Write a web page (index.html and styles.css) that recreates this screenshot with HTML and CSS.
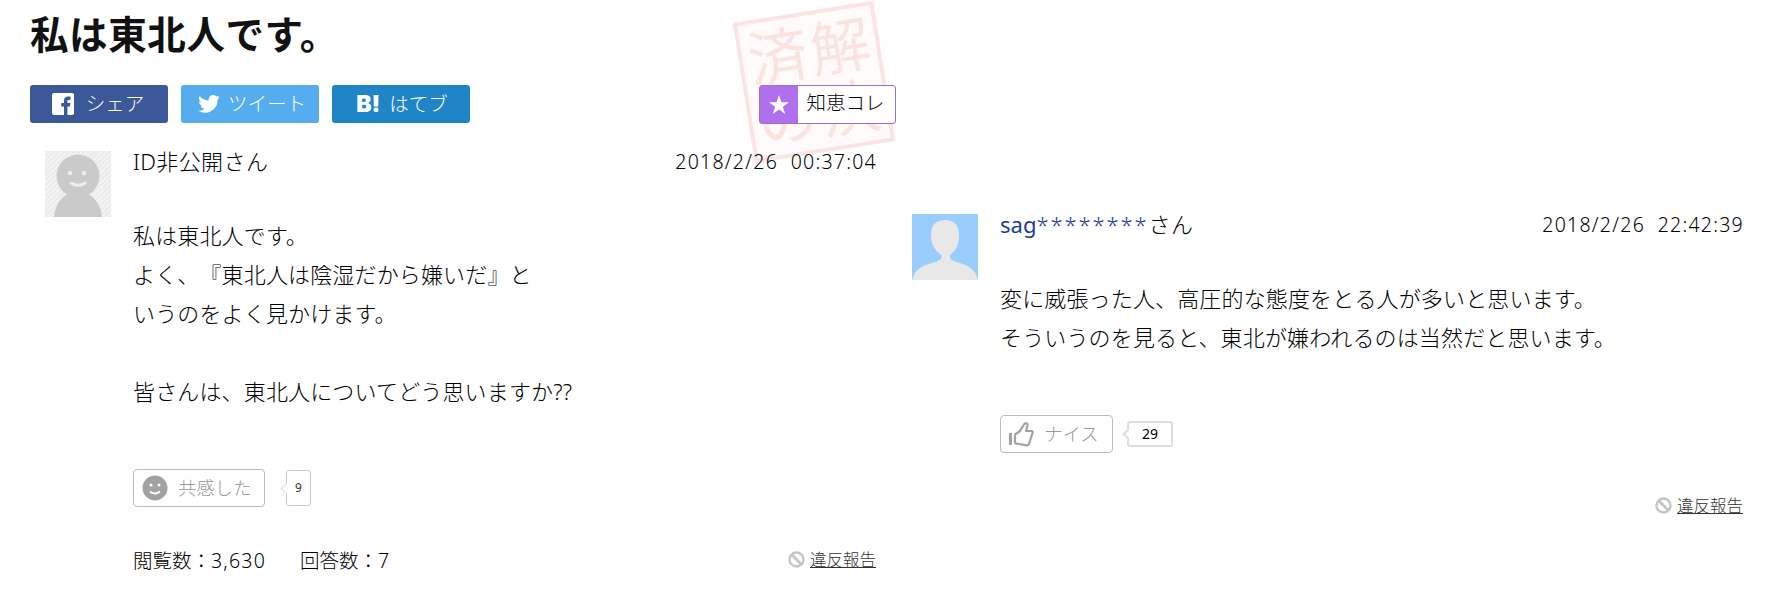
FILE: index.html
```
<!DOCTYPE html>
<html lang="ja">
<head>
    <meta charset="UTF-8">
    <meta name="viewport" content="width=device-width, initial-scale=1.0">
    <title>私は東北人です。</title>
    <link rel="stylesheet" href="styles.css">
</head>
<body>
    <main class="page">
        <section class="question">
            <div class="stamp">
                <span>済</span><span>解</span><span>の</span><span>決</span>
            </div>
            <h1 class="title">私は東北人です。</h1>
            <div class="share-row">
                <a class="share facebook">
                    <svg width="22" height="22" viewBox="0 0 22 22"><rect width="22" height="22" rx="2" fill="#fff"/><path d="M12 22v-8.500H9.200V10H12V7.800C12 5 13.600 3.600 16.200 3.600h2.300V7h-1.700c-1 0-1.400.5-1.400 1.400V10h3l-.5 3.500h-2.500V22z" fill="#3b5998"/></svg>
                    <span>シェア</span>
                </a>
                <a class="share twitter">
                    <svg width="22" height="18" viewBox="0 0 24 20"><path d="M24 2.400a9.800 9.800 0 0 1-2.800.8A4.900 4.900 0 0 0 23.300.5a9.900 9.900 0 0 1-3.100 1.200 4.900 4.900 0 0 0-8.400 4.500A14 14 0 0 1 1.700 1a4.900 4.900 0 0 0 1.500 6.600 4.900 4.900 0 0 1-2.200-.6 4.900 4.900 0 0 0 3.900 4.900 5 5 0 0 1-2.200.1 4.900 4.900 0 0 0 4.600 3.400A9.900 9.900 0 0 1 0 17.500 14 14 0 0 0 21.500 5.100 10 10 0 0 0 24 2.400z" fill="#fff"/></svg>
                    <span>ツイート</span>
                </a>
                <a class="share hatena">
                    <b>B!</b>
                    <span>はてブ</span>
                </a>
                <a class="chiecolle">
                    <span class="star"><svg width="22" height="22" viewBox="0 0 22 22"><path d="M11 1l2.400 7.200H21l-6.100 4.500 2.300 7.300-6.200-4.500L4.800 20l2.300-7.300L1 8.200h7.600z" fill="#fff"/></svg></span>
                    <span class="label">知恵コレ</span>
                </a>
            </div>
            <article class="post">
                <svg class="avatar" width="66" height="66" viewBox="0 0 66 66">
                    <defs><pattern id="stripe" width="5" height="5" patternUnits="userSpaceOnUse"><path d="M-1 1l2-2M0 5l5-5M4 6l2-2" stroke="#e8e8e8" stroke-width="1.300"/></pattern></defs>
                    <rect width="66" height="66" fill="#f3f3f3"/>
                    <rect width="66" height="66" fill="url(#stripe)"/>
                    <path d="M9 66c1-11 6-19 14-23h20c8 4 13 12 14 23z" fill="#cacaca"/>
                    <circle cx="33" cy="25" r="21.500" fill="#cacaca"/>
                    <circle cx="25" cy="22" r="2.200" fill="#efefef"/><circle cx="39" cy="22" r="2.200" fill="#efefef"/>
                    <path d="M26 32q7 4.500 14 0" fill="none" stroke="#efefef" stroke-width="3" stroke-linecap="round"/>
                </svg>
                <div class="content">
                    <header class="post-head">
                        <span class="name">ID非公開さん</span>
                        <time class="date">2018/2/26&nbsp; 00:37:04</time>
                    </header>
                    <p class="text">私は東北人です。<br>よく、『東北人は陰湿だから嫌いだ』と<br>いうのをよく見かけます。<br><br>皆さんは、東北人についてどう思いますか??</p>
                    <div class="actions">
                        <button class="vote empathy">
                            <svg width="26" height="26" viewBox="0 0 26 26"><circle cx="13" cy="13" r="12.500" fill="#a2a2a2"/><circle cx="9" cy="10" r="1.500" fill="#fff"/><circle cx="17" cy="10" r="1.500" fill="#fff"/><path d="M8 16.500q5 4 10 0" fill="none" stroke="#fff" stroke-width="1.800"/></svg>
                            <span>共感した</span>
                        </button>
                        <span class="count small">9</span>
                    </div>
                    <footer class="post-foot">
                        <span>閲覧数：<span class="num">3,630</span></span>
                        <span>回答数：<span class="num">7</span></span>
                        <a class="report">
                            <svg width="17" height="17" viewBox="0 0 17 17"><path d="M3.500 3.500l10 10" stroke="#c4c4c4" stroke-width="2.600"/><circle cx="8.500" cy="8.500" r="7" fill="none" stroke="#c4c4c4" stroke-width="2.400"/></svg>
                            <span>違反報告</span>
                        </a>
                    </footer>
                </div>
            </article>
        </section>

        <section class="answer">
            <article class="post">
                <svg class="avatar" width="66" height="66" viewBox="0 0 66 66">
                    <rect width="66" height="66" fill="#99ccff"/>
                    <path d="M0 66C3 54 12 51 23 48c5-1.500 7-3 6.500-7C23 37 19 30 19 21c0-10 5-15 14-15s14 5 14 15c0 9-3 16-9 20-.5 4 1.500 5.500 6.500 7C55 51 63 54 66 66z" fill="#e8e8e8"/>
                </svg>
                <div class="content">
                    <header class="post-head">
                        <span class="name"><a class="user">sag<i>********</i></a>さん</span>
                        <time class="date">2018/2/26&nbsp; 22:42:39</time>
                    </header>
                    <p class="text">変に威張った人、高圧的な態度をとる人が多いと思います。<br>そういうのを見ると、東北が嫌われるのは当然だと思います。</p>
                    <div class="actions">
                        <button class="vote nice">
                            <svg width="26" height="26" viewBox="0 0 26 26"><path d="M1 12h3v12H1z" fill="#a2a2a2"/><path d="M7 13.500l5-3.500 4-6.500c1-2 4-1.500 3.500 1L18 10h5.500c1 0 1.500 1 1 2L21 23c-.3 1-1 1.500-2 1.300L8 22.500c-.7 0-1-.5-1-1z" fill="none" stroke="#a2a2a2" stroke-width="2.200" stroke-linejoin="round"/></svg>
                            <span>ナイス</span>
                        </button>
                        <span class="count">29</span>
                    </div>
                    <footer class="post-foot">
                        <a class="report">
                            <svg width="17" height="17" viewBox="0 0 17 17"><path d="M3.500 3.500l10 10" stroke="#c4c4c4" stroke-width="2.600"/><circle cx="8.500" cy="8.500" r="7" fill="none" stroke="#c4c4c4" stroke-width="2.400"/></svg>
                            <span>違反報告</span>
                        </a>
                    </footer>
                </div>
            </article>
        </section>
    </main>
</body>
</html>
```
FILE: styles.css
```
* {
    box-sizing: border-box;
}

body {
    margin: 0;
    background: #fff;
    color: #000;
    font-family: "Noto Sans", "Noto Sans CJK JP", sans-serif;
    font-weight: 300;
    text-spacing-trim: space-all;
}

.page {
    display: flex;
    height: 594px;
    overflow: hidden;
}

svg {
    display: block;
    flex: none;
}

.question {
    position: relative;
    width: 897px;
    padding-left: 30px;
}

.title {
    margin: 0;
    padding-top: 7px;
    height: 85px;
    color: #111;
    font-size: 38.5px;
    line-height: 54px;
    font-weight: 700;
    letter-spacing: 0.6px;
}

/* solved stamp behind the buttons */
.stamp {
    position: absolute;
    left: 743px;
    top: 11px;
    width: 142px;
    height: 142px;
    padding: 4px;
    border: 4px solid #fce4e4;
    background: #fffbfb;
    color: #fbe3e0;
    display: grid;
    grid-template-columns: 1fr 1fr;
    font-size: 60px;
    line-height: 63px;
    font-weight: 400;
    text-align: center;
    transform: rotate(-9deg);
    z-index: -1;
}

.share-row {
    display: flex;
    gap: 13px;
    height: 39px;
}

.share {
    display: flex;
    align-items: center;
    justify-content: center;
    width: 138px;
    height: 38px;
    border-radius: 3px;
    color: #fff;
    font-size: 19.5px;
    line-height: 36px;
}

.facebook {
    background: #3b5998;
    gap: 12px;
    padding-right: 2px;
}

.twitter {
    background: #55acee;
    gap: 8px;
    padding-left: 4px;
}

.hatena {
    background: #2085c7;
    gap: 9px;
    padding-left: 2px;
}

.hatena b {
    font-family: Inter, sans-serif;
    font-size: 23px;
    font-weight: 900;
}

.chiecolle {
    display: flex;
    width: 137px;
    margin-left: auto;
    margin-right: 1px;
    border: 1px solid #9a72c0;
    border-radius: 3px;
    background: #fff;
    font-size: 19.5px;
    line-height: 34px;
}

.star {
    display: flex;
    align-items: center;
    justify-content: center;
    width: 38px;
    background: #b070ee;
}

.label {
    flex: 1;
    padding-right: 2px;
    text-align: center;
}

.post {
    display: flex;
    gap: 22px;
}

.question .post {
    padding: 27px 21px 0 15px;
}

.answer {
    flex: 1;
    padding: 214px 22px 0 15px;
}

.content {
    flex: 1;
}

.post-head {
    display: flex;
    justify-content: space-between;
    height: 65px;
    line-height: 22px;
}

.name {
    font-size: 22px;
    line-height: 20px;
    letter-spacing: 0.4px;
}

.user {
    color: #1a3a9c;
    font-weight: 400;
    letter-spacing: 0;
}

.user i {
    font-style: normal;
    font-weight: 300;
    letter-spacing: 1.9px;
}

.date {
    margin-right: -1px;
    font-size: 19.5px;
    letter-spacing: 1.25px;
}

.text {
    margin: 0;
    font-size: 22px;
    line-height: 39px;
    letter-spacing: 0.15px;
}

.actions {
    display: flex;
    align-items: center;
    height: 38px;
    margin-top: 58px;
}

.vote {
    display: flex;
    align-items: center;
    gap: 10px;
    height: 38px;
    padding: 0 0 0 8px;
    border: 1px solid #bbb;
    border-radius: 4px;
    background: #fff;
    color: #999;
    font: inherit;
    font-size: 18.4px;
    line-height: 34px;
}

.empathy {
    width: 132px;
}

.nice {
    width: 113px;
    padding-left: 7px;
}

.count {
    position: relative;
    width: 46px;
    height: 26px;
    margin-left: 14px;
    border: 2px solid #ddd;
    border-radius: 3px;
    font-size: 14px;
    line-height: 21px;
    font-weight: 400;
    text-align: center;
}

/* bubble tail */
.count::before {
    content: "";
    position: absolute;
    left: -5px;
    top: 7px;
    width: 6px;
    height: 6px;
    border: solid #ddd;
    border-width: 0 0 2px 2px;
    background: #fff;
    transform: rotate(45deg);
}

.count.small {
    width: 25px;
    height: 36px;
    margin-left: 21px;
    border-width: 1px;
    border-color: #ccc;
    color: #333;
    font-size: 12px;
    line-height: 33px;
}

.count.small::before {
    top: 14px;
    border-width: 0 0 1px 1px;
}

.post-foot {
    display: flex;
    align-items: center;
    gap: 34px;
    height: 30px;
    margin-top: 37px;
    font-size: 19.5px;
}

.num {
    letter-spacing: 1.2px;
}

.report {
    display: flex;
    align-items: center;
    gap: 5px;
    margin-left: auto;
    color: #333;
    font-size: 16.5px;
    text-decoration: underline;
}
```
